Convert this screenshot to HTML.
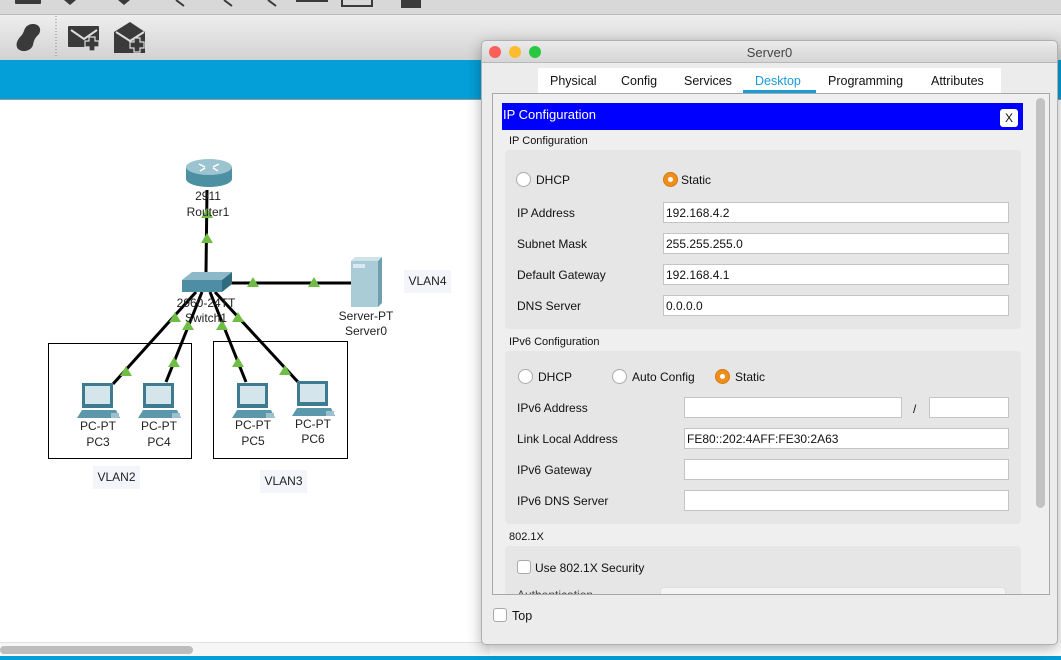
<!DOCTYPE html>
<html><head><meta charset="utf-8"><style>
*{margin:0;padding:0;box-sizing:border-box}
body{width:1061px;height:660px;overflow:hidden;position:relative;background:#fff;font-family:"Liberation Sans","DejaVu Sans",sans-serif;font-size:12px;color:#111}
.a{position:absolute}
.lbl{position:absolute;font-size:12px;color:#222;text-align:center;white-space:nowrap}
.fld{position:absolute;background:#fff;border:1px solid #c4c4c4;height:21px;font-size:12px;padding:3px 0 0 2px}
.rad{position:absolute;width:15px;height:15px;border-radius:50%;background:#fff;border:1px solid #aaa}
.rad.on{background:#ef8e1a;border-color:#d27a10}
.rad.on::after{content:"";position:absolute;left:4px;top:4px;width:5px;height:5px;border-radius:50%;background:#fff}
.t{position:absolute;font-size:12px;white-space:nowrap}
</style></head><body>
<div class="a" style="left:0;top:0;width:1061px;height:15px;background:#d8d8d8;border-bottom:1px solid #b8b8b8"></div>
<div class="a" style="left:0;top:15px;width:1061px;height:45px;background:linear-gradient(#eeeeee,#d2d2d2)"></div>
<div class="a" style="left:0;top:60px;width:1061px;height:40px;background:#049ed8;border-bottom:1px solid #999"></div>
<svg class="a" style="left:0;top:0" width="480" height="60">
<g fill="#3a3a3b"><rect x="15" y="-4" width="26" height="8" rx="1"/><path d="M64 0h12l-6 5z M118 0h12l-6 5z"/><rect x="296" y="-4" width="32" height="6"/><rect x="342" y="-4" width="30" height="10" fill="none" stroke="#3a3a3b" stroke-width="2"/><rect x="401" y="-2" width="20" height="10"/></g>
<path d="M176 0l8 6 M224 0l8 6 M268 0l8 6" stroke="#3a3a3b" stroke-width="2"/>
<path d="M33 24c6 0 9 5 6 10-3 3-5 5-6 11-2 6-10 8-15 4-3-4-1-9 3-13 3-3 3-7 5-9 2-2 4-3 7-3z" fill="#3a3a3b"/>
<line x1="56" y1="16" x2="56" y2="58" stroke="#888" stroke-dasharray="1 2"/>
<rect x="68" y="26" width="31" height="21" rx="1" fill="#3a3a3b"/><path d="M71 30l13 9 13-9" stroke="#ddd" stroke-width="2" fill="none"/>
<path d="M89 37h6v4h4v6h-4v4h-6v-4h-4v-6h4z" fill="#3a3a3b" stroke="#ddd" stroke-width="1.2"/>
<path d="M114 32l16-10 15 10v21h-31z" fill="#3a3a3b"/><path d="M116 32l14 9 14-9" stroke="#ddd" stroke-width="2" fill="none"/>
<path d="M134 38h6v4h4v6h-4v4h-6v-4h-4v-6h4z" fill="#3a3a3b" stroke="#ddd" stroke-width="1.2"/>
</svg>
<svg class="a" style="left:0;top:100px" width="480" height="560">
<g transform="translate(0,-100)">
<g stroke="#000" stroke-width="3"><line x1="207" y1="190" x2="206" y2="272"/><line x1="230" y1="283" x2="352" y2="283"/>
<line x1="196" y1="292" x2="113" y2="384"/><line x1="202" y1="292" x2="166" y2="382"/><line x1="210" y1="292" x2="246" y2="382"/><line x1="215" y1="292" x2="298" y2="382"/></g>
<rect x="48.5" y="343.5" width="143" height="115" fill="none" stroke="#000"/>
<rect x="213.5" y="341.5" width="134" height="117" fill="none" stroke="#000"/>
<path d="M186 167v12a23 8 0 0 0 46 0v-12z" fill="#4d8fa3"/><ellipse cx="209" cy="167" rx="23" ry="8" fill="#9cc4d0"/>
<path d="M199 164l6 3 M219 164l-6 3 M200 171l5-3 M218 171l-5-3" stroke="#fff" stroke-width="1.5"/>
<path d="M182 280l10-8h40l-10 8z" fill="#8cb8c8"/><rect x="182" y="280" width="40" height="12" fill="#4e8ea4"/><path d="M222 280l10-8v12l-10 8z" fill="#2f6c80"/>
<rect x="351" y="261" width="27" height="46" fill="#a9ccd6"/><path d="M351 261l4-4h27l-4 4z" fill="#cfe3ea"/><path d="M378 261l4-4v46l-4 4z" fill="#6f9fae"/><rect x="353" y="264" width="12" height="4" fill="#d9e9ee"/>
<g id="pc"><rect x="82" y="383" width="31" height="25" fill="#3c7b90"/><rect x="85" y="386" width="25" height="18" fill="#d4e6ec"/><path d="M77 418l5-8h34l4 8z" fill="#5c98ab"/><path d="M111 413h8v5h-8z" fill="#9cc0cc"/></g>
<use href="#pc" x="61"/><use href="#pc" x="155"/><use href="#pc" x="215" y="-2"/>
<g fill="#6fbd44"><path d="M201 218l6-10 6 10z M201 243l6-10 6 10z M247 287l6-10 6 10z M308 287l6-10 6 10z M169 322l6-10 6 10z M182 330l6-10 6 10z M216 330l6-10 6 10z M232 322l6-10 6 10z M120 376l6-10 6 10z M168 367l6-10 6 10z M232 367l6-10 6 10z M279 375l6-10 6 10z"/></g>
</g></svg>
<div class="lbl" style="left:176px;top:189px;width:64px">2911</div>
<div class="lbl" style="left:176px;top:205px;width:64px">Router1</div>
<div class="lbl" style="left:166px;top:296px;width:80px">2960-24TT</div>
<div class="lbl" style="left:166px;top:311px;width:80px">Switch1</div>
<div class="lbl" style="left:326px;top:309px;width:80px">Server-PT</div>
<div class="lbl" style="left:326px;top:324px;width:80px">Server0</div>
<div class="lbl" style="left:68px;top:419px;width:60px">PC-PT</div><div class="lbl" style="left:68px;top:435px;width:60px">PC3</div>
<div class="lbl" style="left:129px;top:419px;width:60px">PC-PT</div><div class="lbl" style="left:129px;top:435px;width:60px">PC4</div>
<div class="lbl" style="left:223px;top:418px;width:60px">PC-PT</div><div class="lbl" style="left:223px;top:434px;width:60px">PC5</div>
<div class="lbl" style="left:283px;top:417px;width:60px">PC-PT</div><div class="lbl" style="left:283px;top:432px;width:60px">PC6</div>
<div class="lbl" style="left:93px;top:466px;width:47px;height:23px;background:#f4f5fb;padding-top:4px">VLAN2</div>
<div class="lbl" style="left:260px;top:470px;width:47px;height:23px;background:#f4f5fb;padding-top:4px">VLAN3</div>
<div class="lbl" style="left:404px;top:270px;width:47px;height:23px;background:#f4f5fb;padding-top:4px">VLAN4</div>
<div class="a" style="left:0;top:642px;width:490px;height:13px;background:#f6f6f6;border-top:1px solid #e2e2e2"></div>
<div class="a" style="left:0;top:646px;width:193px;height:8px;border-radius:4px;background:#bdbdbd"></div>
<div class="a" style="left:0;top:656px;width:1061px;height:4px;background:#049ed8"></div>
<div class="a" style="left:481px;top:40px;width:577px;height:605px;background:#ececec;border:1px solid #b0b0b0;border-radius:5px;box-shadow:0 4px 14px rgba(0,0,0,.3)"></div>
<div class="a" style="left:482px;top:41px;width:575px;height:22px;background:linear-gradient(#ebebeb,#d6d6d6);border-bottom:1px solid #b8b8b8;border-radius:5px 5px 0 0;text-align:center;font-size:13px;color:#444;padding-top:4px">Server0</div>
<div class="a" style="left:489px;top:46px;width:12px;height:12px;border-radius:50%;background:#fc5f57"></div>
<div class="a" style="left:509px;top:46px;width:12px;height:12px;border-radius:50%;background:#fdbc2e"></div>
<div class="a" style="left:529px;top:46px;width:12px;height:12px;border-radius:50%;background:#28c840"></div>
<div class="a" style="left:538px;top:68px;width:463px;height:25px;background:#fff"></div>
<div class="t" style="left:550px;top:74px;font-size:12.5px">Physical</div>
<div class="t" style="left:621px;top:74px;font-size:12.5px">Config</div>
<div class="t" style="left:684px;top:74px;font-size:12.5px">Services</div>
<div class="t" style="left:755px;top:74px;font-size:12.5px;color:#1a9ad6">Desktop</div>
<div class="a" style="left:743px;top:90px;width:73px;height:3px;background:#1a9ad6"></div>
<div class="t" style="left:828px;top:74px;font-size:12.5px">Programming</div>
<div class="t" style="left:931px;top:74px;font-size:12.5px">Attributes</div>
<div class="a" style="left:492px;top:93px;width:558px;height:502px;border:1px solid #a8a8a8;background:#efefef"></div>
<div class="a" style="left:1036px;top:98px;width:9px;height:410px;border-radius:5px;background:#c2c2c2"></div>
<div class="a" style="left:502px;top:103px;width:521px;height:27px;background:#0000ff;color:#fff;font-size:13px;padding:4px 0 0 1px">IP Configuration</div>
<div class="a" style="left:1000px;top:109px;width:18px;height:18px;background:#fff;border-radius:3px;font-size:12px;text-align:center;padding-top:2px">X</div>
<div class="t" style="left:509px;top:135px;font-size:11px">IP Configuration</div>
<div class="a" style="left:505px;top:150px;width:516px;height:179px;background:#e6e6e6;border-radius:4px"></div>
<div class="rad" style="left:516px;top:172px"></div><div class="t" style="left:536px;top:173px">DHCP</div>
<div class="rad on" style="left:663px;top:172px"></div><div class="t" style="left:681px;top:173px">Static</div>
<div class="t" style="left:517px;top:206px">IP Address</div><div class="fld" style="left:663px;top:202px;width:346px">192.168.4.2</div>
<div class="t" style="left:517px;top:237px">Subnet Mask</div><div class="fld" style="left:663px;top:233px;width:346px">255.255.255.0</div>
<div class="t" style="left:517px;top:268px">Default Gateway</div><div class="fld" style="left:663px;top:264px;width:346px">192.168.4.1</div>
<div class="t" style="left:517px;top:299px">DNS Server</div><div class="fld" style="left:663px;top:295px;width:346px">0.0.0.0</div>
<div class="t" style="left:509px;top:336px;font-size:11px">IPv6 Configuration</div>
<div class="a" style="left:505px;top:351px;width:516px;height:173px;background:#e6e6e6;border-radius:4px"></div>
<div class="rad" style="left:518px;top:369px"></div><div class="t" style="left:538px;top:370px">DHCP</div>
<div class="rad" style="left:612px;top:369px"></div><div class="t" style="left:632px;top:370px">Auto Config</div>
<div class="rad on" style="left:715px;top:369px"></div><div class="t" style="left:735px;top:370px">Static</div>
<div class="t" style="left:517px;top:401px">IPv6 Address</div><div class="fld" style="left:684px;top:397px;width:218px"></div><div class="t" style="left:913px;top:402px">/</div><div class="fld" style="left:929px;top:397px;width:80px"></div>
<div class="t" style="left:517px;top:432px">Link Local Address</div><div class="fld" style="left:684px;top:428px;width:325px">FE80::202:4AFF:FE30:2A63</div>
<div class="t" style="left:517px;top:463px">IPv6 Gateway</div><div class="fld" style="left:684px;top:459px;width:325px"></div>
<div class="t" style="left:517px;top:494px">IPv6 DNS Server</div><div class="fld" style="left:684px;top:490px;width:325px"></div>
<div class="t" style="left:509px;top:531px;font-size:11px">802.1X</div>
<div class="a" style="left:505px;top:546px;width:516px;height:48px;background:#e6e6e6;border-radius:4px 4px 0 0"></div>
<div class="a" style="left:517px;top:560px;width:14px;height:14px;background:#fff;border:1px solid #aaa;border-radius:3px"></div><div class="t" style="left:535px;top:561px">Use 802.1X Security</div>
<div class="t" style="left:517px;top:588px;height:6px;overflow:hidden;color:#444">Authentication</div>
<div class="a" style="left:660px;top:587px;width:346px;height:7px;background:#f4f4f4;border:1px solid #ddd;border-bottom:none;border-radius:4px 4px 0 0"></div>
<div class="a" style="left:493px;top:608px;width:14px;height:14px;background:#fff;border:1px solid #aaa;border-radius:3px"></div><div class="t" style="left:512px;top:609px;font-size:12.5px">Top</div>
</body></html>
